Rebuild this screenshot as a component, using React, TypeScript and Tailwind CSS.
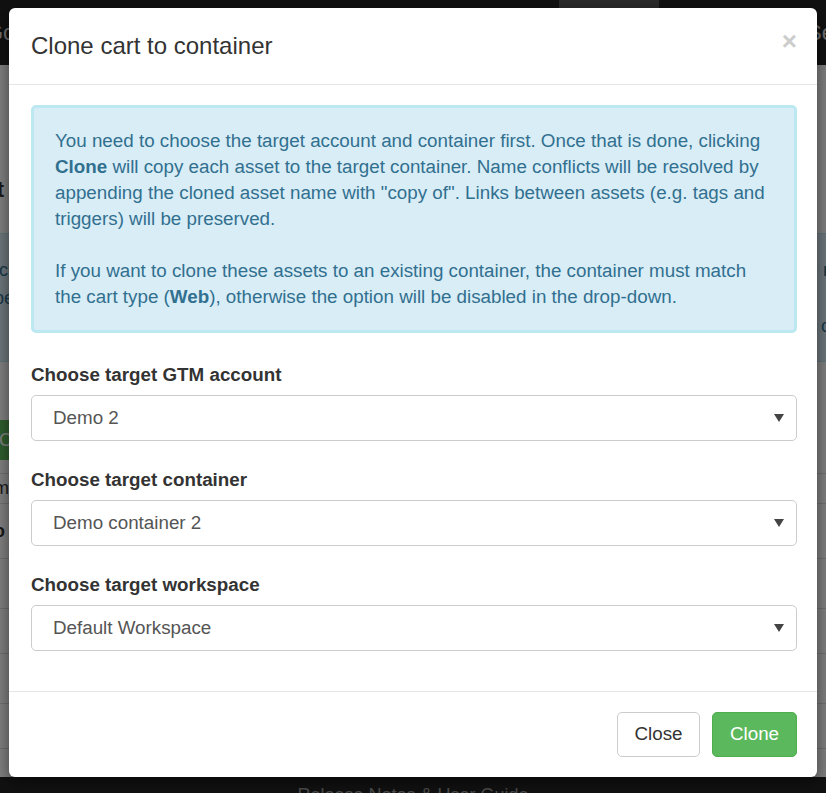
import React from 'react';

const fields = [
  { label: 'Choose target GTM account', value: 'Demo 2' },
  { label: 'Choose target container', value: 'Demo container 2' },
  { label: 'Choose target workspace', value: 'Default Workspace' },
];

const Caret: React.FC = () => (
  <svg width="10" height="8" viewBox="0 0 10 8" className="shrink-0">
    <path d="M0 0h10L5 8z" fill="#444" />
  </svg>
);

const BackgroundPage: React.FC = () => (
  <div className="w-[826px] h-[793px] flex flex-col bg-white">
    {/* Navbar */}
    <div className="h-[65px] shrink-0 bg-[#222] flex items-center justify-between text-[#ddd] text-[22px]">
      <span className="-ml-[14px]">Go</span>
      <div className="self-start ml-auto mr-[148px] w-[100px] h-[24px] bg-[#555] rounded-b-[4px]" />
      <span className="-mr-[8px]">Se</span>
    </div>

    {/* Page content */}
    <div className="flex-1 flex flex-col">
      <div className="h-[108px] shrink-0" />
      <div className="h-[24px] text-[22px] font-bold text-[#333] -ml-[40px]">Cart</div>
      <div className="h-[36px] shrink-0" />
      <div className="h-[129px] shrink-0 bg-[#d9edf7] border-y border-[#bce8f1] text-[#31708f] text-[18px] leading-[28px] pt-[22px] flex justify-between">
        <div className="-ml-[20px]">
          <div>accu</div>
          <div className="pl-[14px]">be</div>
          <div>as</div>
          <div>be</div>
        </div>
        <div className="-mr-[4px] text-right">
          <div className="font-bold">r</div>
          <div>&nbsp;</div>
          <div>c</div>
        </div>
      </div>
      <div className="h-[58px] shrink-0" />
      <div className="h-[40px] w-[80px] bg-[#5cb85c] rounded-[4px] -ml-[60px] text-white text-[18px] flex items-center justify-end pr-[4px]">
        Cl
      </div>
      <div className="h-[14px] shrink-0 border-b border-[#ddd]" />
      <div className="h-[30px] border-b border-[#ddd] text-[18px] text-[#333] -ml-[6px] flex items-center">m</div>
      <div className="h-[55px] border-b border-[#ddd] text-[18px] font-bold text-[#333] -ml-[6px] flex items-center">o</div>
      <div className="h-[50px] border-b border-[#ddd]" />
      <div className="h-[45px] border-b border-[#ddd]" />
      <div className="h-[50px] border-b border-[#ddd]" />
      <div className="h-[45px] border-b border-[#ddd]" />
    </div>

    {/* Footer */}
    <div className="h-[16px] shrink-0 bg-[#222] text-[#999] text-[18px] flex justify-center pt-[7px] overflow-hidden">
      <span className="leading-[22px]">Release Notes &amp; User Guide</span>
    </div>
  </div>
);

export default function App() {
  return (
    <div className="relative w-[826px] h-[793px] overflow-hidden font-['Liberation_Sans',Arial,sans-serif]">
      <BackgroundPage />

      {/* Backdrop */}
      <div className="absolute inset-0 bg-black/50" />

      {/* Modal */}
      <div className="absolute left-[9px] top-[8px] w-[808px] bg-white rounded-[6px] shadow-[0_5px_15px_rgba(0,0,0,0.5)] flex flex-col">
        <div className="h-[77px] pl-[22px] pr-[20px] flex items-center justify-between border-b border-[#e5e5e5]">
          <h4 className="text-[24px] text-[#333] leading-[26px]">Clone cart to container</h4>
          <button className="text-[26px] font-bold text-[#ccc] leading-none -mt-[10px]">×</button>
        </div>

        <div className="pl-[22px] pr-[20px] pt-[20px] pb-[14px]">
          <div className="border-[3px] border-[#bce8f1] bg-[#d9edf7] rounded-[5px] px-[21px] py-[20px] text-[#31708f] text-[18.8px] leading-[26px]">
            <p>
              You need to choose the target account and container first. Once that is done, clicking{' '}
              <b>Clone</b> will copy each asset to the target container. Name conflicts will be resolved by
              appending the cloned asset name with "copy of". Links between assets (e.g. tags and
              triggers) will be preserved.
            </p>
            <p className="mt-[26px]">
              If you want to clone these assets to an existing container, the container must match the cart
              type (<b>Web</b>), otherwise the option will be disabled in the drop-down.
            </p>
          </div>

          <div className="mt-[29px] flex flex-col">
            {fields.map((f) => (
              <div key={f.label} className="mb-[26px]">
                <label className="block text-[18.8px] leading-[26px] font-bold text-[#333] mb-[7px]">{f.label}</label>
                <div className="h-[46px] rounded-[5px] border border-[#ccc] pl-[21px] pr-[12px] flex items-center justify-between text-[18.8px] text-[#555]">
                  <span>{f.value}</span>
                  <Caret />
                </div>
              </div>
            ))}
          </div>
        </div>

        <div className="border-t border-[#e5e5e5] pt-[20px] pb-[20px] pr-[20px] flex justify-end gap-[12px]">
          <button className="h-[45px] w-[83px] rounded-[5px] border border-[#ccc] bg-white text-[18.8px] text-[#333]">
            Close
          </button>
          <button className="h-[45px] w-[85px] rounded-[5px] border border-[#4cae4c] bg-[#5cb85c] text-[18.8px] text-white">
            Clone
          </button>
        </div>
      </div>
    </div>
  );
}
